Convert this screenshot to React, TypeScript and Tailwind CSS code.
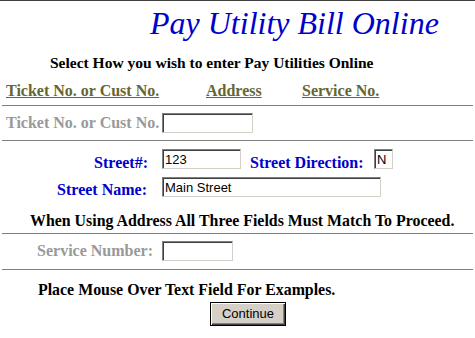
import React, { useState } from 'react';

// classic sunken text box
const boxCls =
    "h-[20px] bg-white border border-[#808080] border-b-[#d4d0c8] border-r-[#d4d0c8] shadow-[inset_1px_1px_0_#404040] px-[2px] text-[13px] font-normal text-black outline-none font-['Liberation_Sans',Arial,sans-serif]";

const Rule: React.FC<{ top: string }> = ({ top }) => (
    <div className={`${top} mx-[2px] h-px bg-[#808080]`} />
);

export default function App() {
    const [ticket, setTicket] = useState('');
    const [streetNo, setStreetNo] = useState('123');
    const [direction, setDirection] = useState('N');
    const [streetName, setStreetName] = useState('Main Street');
    const [service, setService] = useState('');

    return (
        <div className="w-[475px] h-[338px] overflow-hidden bg-white border-t border-[#404040] font-['Liberation_Serif','Times_New_Roman',serif]">
            <div className="mt-[2px] pl-[150px] h-[40px] leading-[40px] text-[32px] italic text-[#0000cc] whitespace-nowrap">
                Pay Utility Bill Online
            </div>

            <div className="mt-[10px] pl-[50px] h-[20px] leading-[20px] text-[15.5px] font-bold text-black whitespace-nowrap">
                Select How you wish to enter Pay Utilities Online
            </div>

            <div className="mt-[8px] pl-[6px] flex h-[20px] leading-[20px] text-[16px] font-bold text-[#666633] whitespace-nowrap">
                <a className="w-[200px] underline">Ticket No. or Cust No.</a>
                <a className="w-[96px] underline">Address</a>
                <a className="underline">Service No.</a>
            </div>

            <Rule top="mt-[4px]" />

            {/* ticket / customer number */}
            <div className="mt-[7px] flex items-start h-[20px] text-[16px] font-bold whitespace-nowrap">
                <label className="w-[162px] pl-[6px] leading-[20px] text-[#999999]">Ticket No. or Cust No.</label>
                <input className={`${boxCls} w-[91px]`} value={ticket} onChange={(e) => setTicket(e.target.value)} />
            </div>

            <Rule top="mt-[7px]" />

            {/* address */}
            <div className="mt-[8px] flex items-start h-[20px] text-[16px] font-bold text-[#0000cc] whitespace-nowrap">
                <label className="w-[148px] pt-[4px] leading-[20px] text-right">Street#:</label>
                <input className={`${boxCls} ml-[14px] w-[79px]`} value={streetNo} onChange={(e) => setStreetNo(e.target.value)} />
                <label className="ml-[9px] w-[124px] pt-[4px] leading-[20px]">Street Direction:</label>
                <input className={`${boxCls} w-[19px] px-[1px]`} value={direction} onChange={(e) => setDirection(e.target.value)} />
            </div>

            <div className="mt-[8px] flex items-start h-[20px] text-[16px] font-bold text-[#0000cc] whitespace-nowrap">
                <label className="w-[147px] pt-[3px] leading-[20px] text-right">Street Name:</label>
                <input className={`${boxCls} ml-[15px] w-[219px]`} value={streetName} onChange={(e) => setStreetName(e.target.value)} />
            </div>

            <div className="mt-[14px] pl-[30px] h-[20px] leading-[20px] text-[15.9px] font-bold text-black whitespace-nowrap">
                When Using Address All Three Fields Must Match To Proceed.
            </div>

            <Rule top="mt-[2px]" />

            {/* service number */}
            <div className="mt-[7px] flex items-start h-[20px] text-[16px] font-bold whitespace-nowrap">
                <label className="w-[153px] leading-[20px] text-right text-[#999999]">Service Number:</label>
                <input className={`${boxCls} ml-[9px] w-[71px]`} value={service} onChange={(e) => setService(e.target.value)} />
            </div>

            <Rule top="mt-[8px]" />

            <div className="mt-[10px] pl-[38px] h-[20px] leading-[20px] text-[15.9px] font-bold text-black whitespace-nowrap">
                Place Mouse Over Text Field For Examples.
            </div>

            <div className="mt-[1px] pl-[210px]">
                <button className="w-[76px] h-[24px] bg-[#d4d0c8] border border-black shadow-[inset_1px_1px_0_#ffffff,inset_-1px_-1px_0_#404040,inset_-2px_-2px_0_#808080] text-[13px] font-normal text-black font-['Liberation_Sans',Arial,sans-serif]">
                    Continue
                </button>
            </div>
        </div>
    );
}
